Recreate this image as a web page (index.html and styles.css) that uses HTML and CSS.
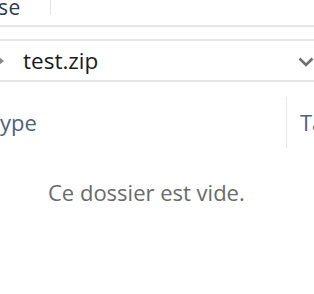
FILE: index.html
```html
<!DOCTYPE html>
<html lang="fr">
<head>
<meta charset="utf-8">
<link rel="stylesheet" href="styles.css">
</head>
<body>
<div class="window">
  <div class="ribbon">
    <span class="ribbon-label">se</span>
    <span class="ribbon-sep"></span>
  </div>
  <div class="address">
    <svg class="crumb-arrow" width="6" height="10" viewBox="0 0 6 10"><path d="M0 1 L5 5 L0 9 Z" fill="#8a8a8a"/></svg>
    <span class="address-text">test.zip</span>
    <svg class="dropdown" width="16" height="10" viewBox="0 0 16 10"><path d="M1.5 1.5 L8 8 L14.5 1.5" fill="none" stroke="#6e6e6e" stroke-width="2.6"/></svg>
  </div>
  <div class="columns">
    <span class="col col-type">ype</span>
    <span class="col-sep"></span>
    <span class="col col-size">Ta</span>
  </div>
  <div class="empty">Ce dossier est vide.</div>
</div>
</body>
</html>
```
FILE: styles.css
```css
html, body {
  margin: 0;
  padding: 0;
  background: #ffffff;
}
.window {
  width: 314px;
  height: 294px;
  overflow: hidden;
  font-family: "Open Sans", "Noto Sans", sans-serif;
  display: flex;
  flex-direction: column;
}
.ribbon {
  height: 25px;
  border-bottom: 2px solid #e6e6e6;
  display: flex;
  align-items: flex-start;
  flex: none;
}
.ribbon-label {
  font-size: 21px;
  line-height: 14px;
  height: 15px;
  color: #2c3a52;
  margin-left: -2px;
  width: 52px;
  overflow: hidden;
  letter-spacing: 0.5px;
  flex: none;
}
.ribbon-sep {
  width: 1px;
  height: 15px;
  background: #e3e3e3;
  flex: none;
}
.address {
  margin-top: 12px;
  height: 39px;
  border-top: 2px solid #e6e6e6;
  border-bottom: 2px solid #e6e6e6;
  display: flex;
  align-items: center;
  flex: none;
}
.crumb-arrow {
  margin-left: -1px;
  flex: none;
}
.address-text {
  margin-left: 18px;
  font-size: 22.5px;
  color: #1b1b1b;
  flex: 1;
}
.dropdown {
  flex: none;
  margin-top: 3px;
}
.columns {
  margin-top: 15px;
  height: 51px;
  display: flex;
  align-items: center;
  flex: none;
}
.col {
  font-size: 22px;
  color: #4f5f7c;
  flex: none;
}
.col-type {
  width: 286px;
  margin-top: -2px;
}
.col-sep {
  width: 1px;
  height: 51px;
  background: #e6e6e6;
  flex: none;
}
.col-size {
  margin-left: 13px;
  margin-top: -2px;
}
.empty {
  margin-top: 29px;
  padding-left: 48px;
  font-size: 22px;
  color: #6b6b6b;
  flex: none;
}
```
